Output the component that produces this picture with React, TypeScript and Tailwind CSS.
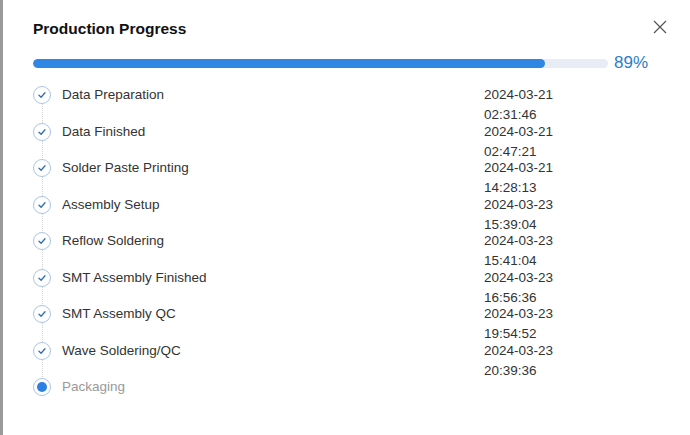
import React from 'react'

type Step = { name: string; date: string; time: string; done: boolean }

const steps: Step[] = [
  { name: 'Data Preparation', date: '2024-03-21', time: '02:31:46', done: true },
  { name: 'Data Finished', date: '2024-03-21', time: '02:47:21', done: true },
  { name: 'Solder Paste Printing', date: '2024-03-21', time: '14:28:13', done: true },
  { name: 'Assembly Setup', date: '2024-03-23', time: '15:39:04', done: true },
  { name: 'Reflow Soldering', date: '2024-03-23', time: '15:41:04', done: true },
  { name: 'SMT Assembly Finished', date: '2024-03-23', time: '16:56:36', done: true },
  { name: 'SMT Assembly QC', date: '2024-03-23', time: '19:54:52', done: true },
  { name: 'Wave Soldering/QC', date: '2024-03-23', time: '20:39:36', done: true },
  { name: 'Packaging', date: '', time: '', done: false },
]

const percent = 89

function StepIcon({ done }: { done: boolean }) {
  return (
    <div className="w-[18px] h-[18px] rounded-full border border-[#a9c5e6] flex items-center justify-center bg-white">
      {done ? (
        <svg width="10" height="10" viewBox="0 0 10 10" fill="none">
          <path d="M2 5.2 L4.1 7.2 L8 2.8" stroke="#2f6db5" strokeWidth="1.3" strokeLinecap="round" strokeLinejoin="round" />
        </svg>
      ) : (
        <div className="w-[10px] h-[10px] rounded-full bg-[#2b80e2]" />
      )}
    </div>
  )
}

export default function App() {
  return (
    <div className="w-[690px] h-[435px] bg-white border-l-[3px] border-[#9a9a9a] pl-[30px] pt-[18px] relative overflow-hidden" style={{ fontFamily: '"Liberation Sans", Arial, sans-serif' }}>
      {/* close */}
      <button className="absolute top-[20px] right-[23px] text-[#555]">
        <svg width="14" height="14" viewBox="0 0 14 14" fill="none">
          <path d="M1 1 L13 13 M13 1 L1 13" stroke="#555" strokeWidth="1.2" />
        </svg>
      </button>

      <h2 className="text-[15.5px] leading-[21px] font-bold text-[#111]">Production Progress</h2>

      <div className="flex items-center h-[20px] mt-[14px]">
        <div className="w-[575px] h-[9px] rounded-full bg-[#e8ecf4] overflow-hidden">
          <div className="h-full rounded-full bg-[#2f86e3]" style={{ width: `${percent}%` }} />
        </div>
        <span className="ml-[6px] text-[17px] text-[#2b7ccd]">{percent}%</span>
      </div>

      <div className="mt-[4px]">
        {steps.map((s, i) => (
          <div key={s.name} className="flex h-[36.5px]">
            <div className="relative w-[18px] flex items-center">
              <StepIcon done={s.done} />
              {i < steps.length - 1 && (
                <div className="absolute left-[8.5px] top-[27px] h-[19px] border-l border-dotted border-[#d4d4d4]" />
              )}
            </div>
            <div className={`w-[422px] ml-[11px] flex items-center text-[13.5px] ${s.done ? 'text-[#333]' : 'text-[#999]'}`}>
              {s.name}
            </div>
            <div className="pt-[8px] text-[13.5px] leading-[20px] text-[#333]">
              <div>{s.date}</div>
              <div>{s.time}</div>
            </div>
          </div>
        ))}
      </div>
    </div>
  )
}
